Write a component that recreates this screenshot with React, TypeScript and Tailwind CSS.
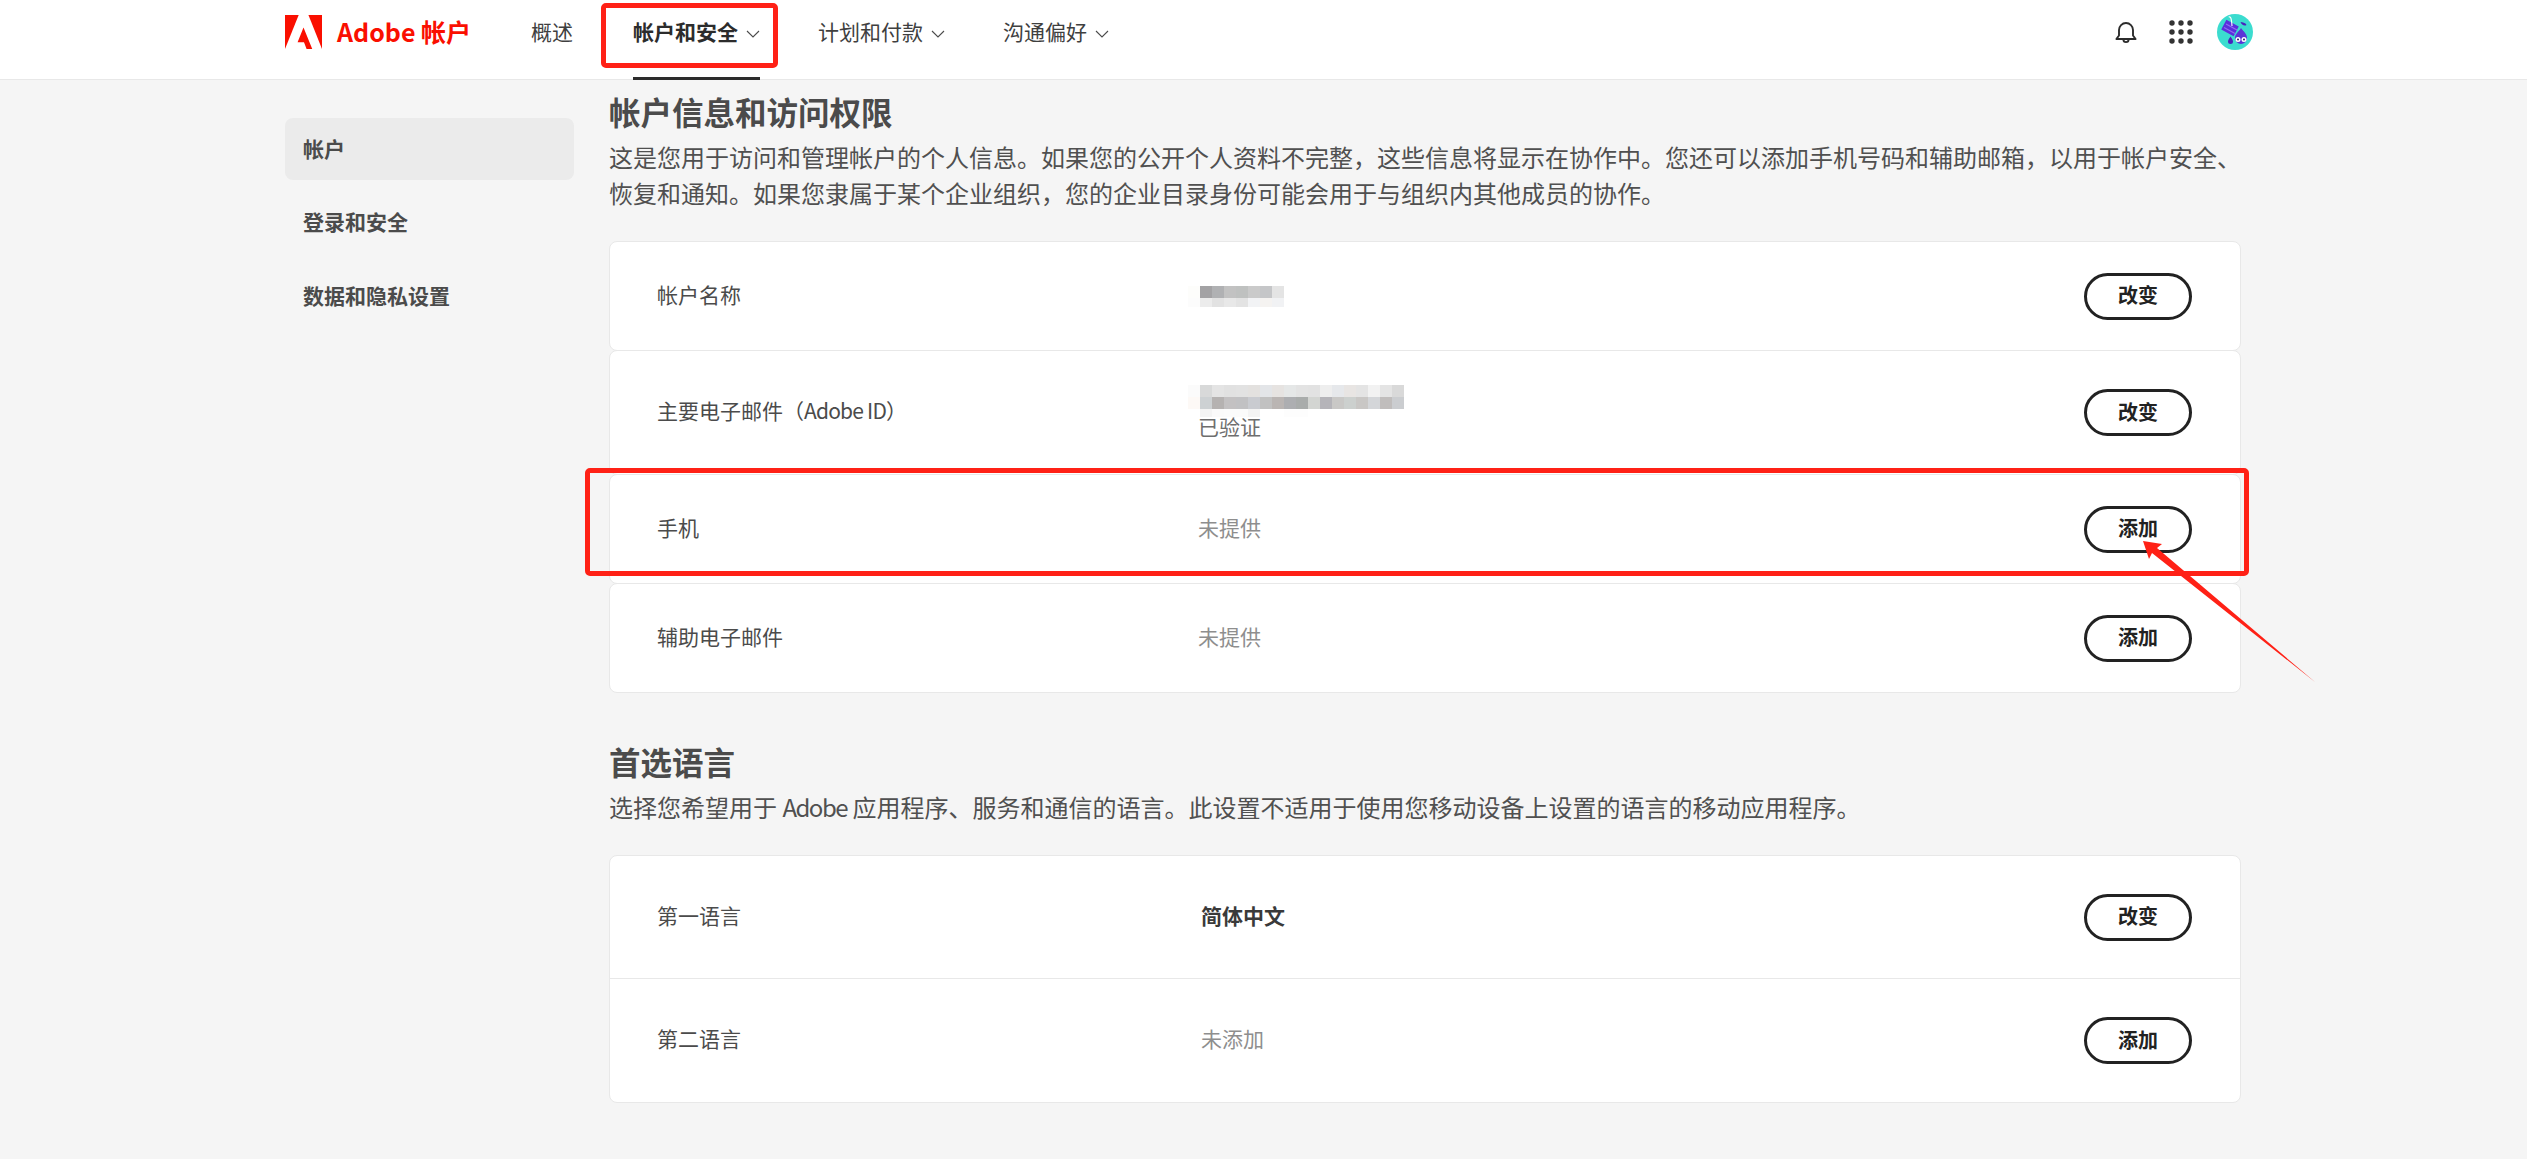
import type { ReactNode } from 'react';

const nameMosaic = [
  ['#fdfdfb', '#a3a2a4', '#b0b1b3', '#c2c2c2', '#bfc1c0', '#cacaca', '#c5c6c8', '#e4e4e4'],
  ['#fcfcfc', '#ececec', '#e2e2e2', '#e8e8e8', '#e3e3e3', '#f2f3f5', '#f5f3f1', '#f1f2f4'],
];

const emailMosaic = [
  ['#fbfbfb', '#d8d9d9', '#e4e4e4', '#e1e1e1', '#e2e2e2', '#e3e1df', '#e3e5e8', '#e6e3e1', '#e5e7e7', '#e3e3e3', '#e2e2e2', '#eeeeee', '#e6e8eb', '#e8e5e3', '#e4e4e4', '#f2f2f2', '#e4e4e4', '#d9d9d9'],
  ['#fdf9f6', '#cdd1d3', '#b5b2b1', '#c3c1c2', '#c1c1c3', '#c9cbd0', '#c1c1c1', '#bab5b3', '#adaeb1', '#a9acab', '#d3d5d2', '#b5b4b9', '#c9c8c6', '#ccd0ce', '#c9c7c5', '#d4d6d9', '#c0bdbc', '#cbcdd0'],
  ['#ffffff', '#f4f4f4', '#fafafa', '#fbfbfb', '#fbfbfb', '#f4f4f4', '#ffffff', '#ffffff', '#fdfdfd', '#fdfdfd', '#ffffff', '#ffffff', '#ffffff', '#ffffff', '#ffffff', '#ffffff', '#ffffff', '#ffffff'],
];

function Mosaic({ rows, height }: { rows: string[][]; height: number }) {
  return (
    <svg width={rows[0].length * 12} height={height} className="-ml-2.5 block" shapeRendering="crispEdges">
      {rows.map((row, y) =>
        row.map((fill, x) => <rect key={`${x}-${y}`} x={x * 12} y={y * 12} width="12" height="12" fill={fill} />)
      )}
    </svg>
  );
}

function Chevron() {
  return (
    <svg width="14" height="8" viewBox="0 0 14 8" fill="none" className="mt-[3px]">
      <path d="M1 1l6 6 6-6" stroke="#4b4b4b" strokeWidth="1.1" />
    </svg>
  );
}

function NavItem({ label, active = false, menu = false }: { label: string; active?: boolean; menu?: boolean }) {
  return (
    <div className={`relative flex h-16 items-center gap-2 text-[21px] ${active ? 'font-bold text-[#2c2c2c]' : 'text-[#3f3f3f]'}`}>
      <span>{label}</span>
      {menu && <Chevron />}
      {active && <div className="absolute left-0 right-0 top-[77px] h-[3px] bg-[#2c2c2c]" />}
    </div>
  );
}

function ActionButton({ label }: { label: string }) {
  return (
    <button className="h-[47px] w-[108px] shrink-0 rounded-full border-[3px] border-[#222222] bg-white pb-0.5 text-[20px] font-bold leading-none text-[#222222]">
      {label}
    </button>
  );
}

interface RowProps {
  label: ReactNode;
  action: string;
  className: string;
  valueWidth: string;
  children: ReactNode;
}

function Row({ label, action, className, valueWidth, children }: RowProps) {
  return (
    <div className={`flex items-center pl-[47px] pr-[48px] ${className}`}>
      <div className={`${valueWidth} shrink-0 pb-[3px] text-[#4b4b4b]`}>{label}</div>
      <div className="flex-1">{children}</div>
      <ActionButton label={action} />
    </div>
  );
}

function Annotations() {
  return (
    <>
      <div className="pointer-events-none absolute left-[601px] top-[3px] h-[65px] w-[177px] rounded-[5px] border-[5px] border-[#ff2116]" />
      <div className="pointer-events-none absolute left-[585px] top-[468px] h-[108px] w-[1664px] rounded-[5px] border-[5px] border-[#ff2116]" />
      <svg className="pointer-events-none absolute left-[2130px] top-[530px]" width="200" height="160" viewBox="2130 530 200 160">
        <polygon points="2143,541 2162,544 2157,548 2315,682 2152,553 2149,559" fill="#ff2116" />
      </svg>
    </>
  );
}

export default function App() {
  return (
    <div className="relative min-h-screen overflow-hidden bg-[#f5f5f5] font-['Noto_Sans_CJK_SC','Noto_Sans',sans-serif] text-[21px]">
      {/* Header */}
      <header className="flex h-20 items-start border-b border-[#e8e8e8] bg-white pl-[285px] pr-[274px]">
        <div className="flex h-16 items-center gap-[15px]">
          <svg width="37" height="34" viewBox="0 0 30 26" preserveAspectRatio="none" fill="#fa0f00">
            <path d="M19 0h11v26z" />
            <path d="M11.1 0H0v26z" />
            <path d="M15 9.6 22.1 26h-4.6l-2.1-5.2h-5.2z" />
          </svg>
          <span className="text-[25px] font-bold text-[#fa0f00]">Adobe 帐户</span>
        </div>
        <nav className="ml-[60px] flex gap-[58px]">
          <div className="pr-[2px]">
            <NavItem label="概述" />
          </div>
          <NavItem label="帐户和安全" active menu />
          <NavItem label="计划和付款" menu />
          <NavItem label="沟通偏好" menu />
        </nav>
        <div className="ml-auto flex h-16 items-center">
          <svg width="22" height="23" viewBox="0 0 22 23" fill="none" stroke="#2c2c2c" strokeWidth="1.9" strokeLinejoin="round">
            <path d="M4 14.5V9a7 7 0 0 1 14 0v5.5l2.6 3.5H1.4z" />
            <path d="M8.4 18.5a2.6 2.6 0 0 0 5.2 0" />
          </svg>
          <svg width="24" height="24" viewBox="0 0 24 24" fill="#333333" className="ml-8">
            {[3, 12, 21].map((cy) =>
              [3, 12, 21].map((cx) => <circle key={`${cx}-${cy}`} cx={cx} cy={cy} r="2.7" />)
            )}
          </svg>
          <svg width="36" height="36" viewBox="0 0 36 36" className="ml-6">
            <circle cx="18" cy="18" r="18" fill="#3bdccf" />
            <rect x="6" y="8.5" width="14" height="11" transform="rotate(28 13 14)" fill="#5b2fdc" />
            <path d="M7 13.5l11 6M9 10l11 6" stroke="#8f6cf2" strokeWidth="1.2" />
            <path d="M11.7 3c2-.8 2.8 1 3.3 9" stroke="#ffffff" strokeWidth="1.1" fill="none" />
            <path d="M24 14c3 4 6 6 6 10a6 6 0 0 1-12 0c0-4 3.500-6 6-10z" fill="#5b34d6" />
            <path d="M13.500 22.500c1 2 2.500 3 2.500 5a2.500 2.500 0 0 1-5 0c0-2 1.500-3 2.500-5z" fill="#4a22bd" />
            <path d="M23.500 8c2 0 5 .8 6 3-2 1.500-5 0-6-3z" fill="#4a22bd" />
            <circle cx="21" cy="25.500" r="2.500" fill="#ffffff" />
            <circle cx="27" cy="25.500" r="2.500" fill="#ffffff" />
            <circle cx="21" cy="25.500" r="1" fill="#2a1a6b" />
            <circle cx="27" cy="25.500" r="1" fill="#2a1a6b" />
          </svg>
        </div>
      </header>

      <div className="flex pl-[285px]">
        {/* Sidebar */}
        <aside className="flex w-[289px] shrink-0 flex-col gap-3 pt-[38px] font-bold text-[#4b4b4b]">
          <div className="flex h-[62px] items-center rounded-lg bg-[#ebebeb] px-[18px]">帐户</div>
          <div className="flex h-[62px] items-center px-[18px] pb-0.5">登录和安全</div>
          <div className="flex h-[62px] items-center px-[18px] pb-0.5">数据和隐私设置</div>
        </aside>

        <main className="ml-[35px] w-[1632px] pb-[57px] pt-[13px]">
          <h2 className="h-10 text-[31.5px] font-bold leading-[37px] text-[#4b4b4b]">帐户信息和访问权限</h2>
          <p className="mt-1.5 w-[1650px] text-[24px] leading-9 text-[#505050]">
            这是您用于访问和管理帐户的个人信息。如果您的公开个人资料不完整，这些信息将显示在协作中。您还可以添加手机号码和辅助邮箱，以用于帐户安全、
            <br />
            恢复和通知。如果您隶属于某个企业组织，您的企业目录身份可能会用于与组织内其他成员的协作。
          </p>

          <div className="mt-[30px] flex flex-col">
            <Row label="帐户名称" action="改变" valueWidth="w-[541px]" className="h-[110px] rounded-lg border border-[#e8e8e8] bg-white">
              <Mosaic rows={nameMosaic} height={21} />
            </Row>
            <Row
              label={
                <>
                  主要电子邮件（<span className="tracking-[-0.8px]">Adobe ID</span>）
                </>
              }
              action="改变"
              valueWidth="w-[541px]"
              className="-mt-px h-[125px] rounded-lg border border-[#e8e8e8] bg-white"
            >
              <div className="pb-[3px]">
                <Mosaic rows={emailMosaic} height={32} />
                <div className="pb-0.5 leading-[19px] text-[#6e6e6e]">已验证</div>
              </div>
            </Row>
            <Row label="手机" action="添加" valueWidth="w-[541px]" className="-mt-px h-[110px] rounded-lg border border-[#e8e8e8] bg-white">
              <div className="pb-[3px] text-[#8e8e8e]">未提供</div>
            </Row>
            <Row label="辅助电子邮件" action="添加" valueWidth="w-[541px]" className="-mt-px h-[110px] rounded-lg border border-[#e8e8e8] bg-white">
              <div className="pb-[3px] text-[#8e8e8e]">未提供</div>
            </Row>
          </div>

          <h2 className="mt-[50px] h-10 text-[31.5px] font-bold leading-[37px] text-[#4b4b4b]">首选语言</h2>
          <p className="mt-1.5 text-[24px] leading-9 text-[#505050]">
            选择您希望用于 <span className="tracking-[-1.5px]">Adobe</span> 应用程序、服务和通信的语言。此设置不适用于使用您移动设备上设置的语言的移动应用程序。
          </p>

          <div className="mt-[30px] rounded-lg border border-[#e8e8e8] bg-white">
            <Row label="第一语言" action="改变" valueWidth="w-[544px]" className="h-[123px] border-b border-[#e8e8e8]">
              <div className="pb-[3px] font-bold text-[#3a3a3a]">简体中文</div>
            </Row>
            <Row label="第二语言" action="添加" valueWidth="w-[544px]" className="h-[123px]">
              <div className="pb-[3px] text-[#8e8e8e]">未添加</div>
            </Row>
          </div>
        </main>
      </div>

      <Annotations />
    </div>
  );
}
